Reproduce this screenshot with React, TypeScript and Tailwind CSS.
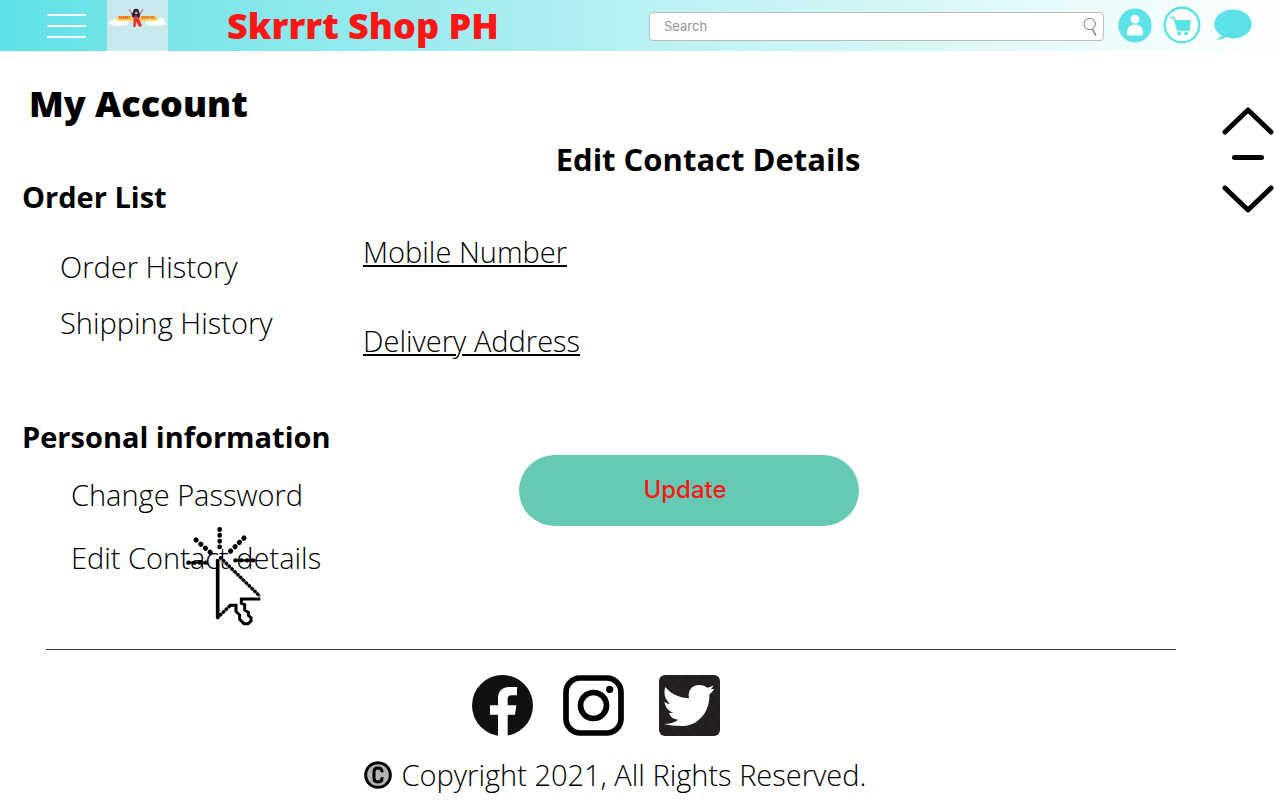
import type { ReactNode } from "react";

function Logo() {
  return (
    <svg viewBox="0 0 183 153" className="h-[51px] w-[61px] shrink-0" role="img" aria-label="Skrrrt Shop PH logo">
      <rect width="183" height="153" fill="#c9e9ee" />
      <g fill="#fff">
        <ellipse cx="36" cy="69" rx="30" ry="8" />
        <circle cx="24" cy="64" r="7" />
        <circle cx="40" cy="62" r="7" />
        <ellipse cx="146" cy="69" rx="31" ry="8" />
        <circle cx="140" cy="62" r="7" />
        <circle cx="162" cy="62" r="8" />
      </g>
      <rect x="29" y="47" width="122" height="15" rx="7" fill="#fcd34f" />
      <text x="35" y="58" fontSize="9" fontWeight="800" fill="#e0502b" fontFamily="Open Sans, sans-serif">SKRRRT</text>
      <text x="103" y="58" fontSize="9" fontWeight="800" fill="#e0502b" fontFamily="Open Sans, sans-serif">SHOP PH</text>
      <path d="M66 29L77 42M108 29L98 42" stroke="#b98ba9" strokeWidth="4" strokeLinecap="round" />
      <path d="M72 38L80 44H95L103 36L96 55H79L72 42Z" fill="#9a3d91" />
      <circle cx="87" cy="35" r="9" fill="#2a2030" />
      <path d="M77 36h20l2 14h-7l-5-5-6 5h-6z" fill="#2a2030" />
      <circle cx="88" cy="39" r="4" fill="#e4a7a0" />
      <path d="M80 55H96L105 78 96 80 88 65 85 81H79Z" fill="#e8301e" />
    </svg>
  );
}

function UserIcon() {
  return (
    <svg viewBox="0 0 102 104" className="h-[35px] w-[34px]" aria-hidden="true">
      <ellipse cx="51" cy="52" rx="50" ry="51" fill="#5ce1e6" />
      <circle cx="51" cy="33" r="13" fill="#fff" />
      <path d="M27 76c0-16 8-27 24-27s24 11 24 27c0 4-2 6-6 6H33c-4 0-6-2-6-6z" fill="#fff" />
    </svg>
  );
}

function CartIcon() {
  return (
    <svg viewBox="0 0 112 112" className="size-[38px]" aria-hidden="true">
      <circle cx="56" cy="56" r="51" fill="#fff" stroke="#5ce1e6" strokeWidth="7" />
      <path d="M23 34h10l10 37h35" fill="none" stroke="#5ce1e6" strokeWidth="4" strokeLinejoin="round" strokeLinecap="round" />
      <path d="M33 41h49l-4 31H42z" fill="#5ce1e6" />
      <circle cx="48" cy="81" r="6" fill="#5ce1e6" />
      <circle cx="68" cy="81" r="6" fill="#5ce1e6" />
    </svg>
  );
}

function ChatIcon() {
  return (
    <svg viewBox="0 0 116 96" className="h-8 w-[38px]" aria-hidden="true">
      <path d="M58 1C27 1 1 20 1 45c0 15 8 27 22 35-4 6-10 10-19 13 14 1 25-3 34-8 6 3 13 4 20 4 32 0 57-19 57-44S89 1 58 1z" fill="#5ce1e6" />
    </svg>
  );
}

function FacebookIcon() {
  return (
    <svg viewBox="0 0 183 183" className="size-[61px]" aria-hidden="true">
      <circle cx="91.5" cy="91.5" r="91.5" fill="#11100e" />
      <path d="M78 184V119H54V91h24V70c0-22 13-34 34-34h23v25h-17c-8 0-11 5-11 11v19h26l-4 28h-22v65z" fill="#fff" />
    </svg>
  );
}

function InstagramIcon() {
  return (
    <svg viewBox="0 0 183 183" className="size-[61px]" aria-hidden="true" fill="none" stroke="#000" strokeWidth="17">
      <rect x="9" y="9" width="165" height="165" rx="43" />
      <circle cx="91.5" cy="91.5" r="39" />
      <circle cx="140" cy="43" r="11" fill="#000" stroke="none" />
    </svg>
  );
}

function TwitterIcon() {
  return (
    <svg viewBox="0 0 183 183" className="size-[61px]" aria-hidden="true">
      <rect width="183" height="183" rx="18" fill="#231f20" />
      <path d="M0 30L153 183M0 75L108 183M0 120L63 183M15 0L183 168M60 0L183 123M105 0L183 78M150 0L183 33M33 0L0 33M78 0L0 78M123 0L0 123M168 0L0 168M183 30L30 183M183 75L75 183M183 120L120 183" stroke="#393536" strokeWidth="1" />
      <path d="M19 36C36 57 59 68 90 70C85 46 100 30 120 30C131 30 139 34 145 38C152 37 157 35 163 31C161 36 159 39 156 43L166 42C162 48 157 53 151 59C153 112 116 153 68 153C47 153 30 151 14 147C33 147 46 143 57 134C43 133 34 126 30 114L43 113C29 108 20 98 16 80C23 85 28 86 33 86C17 73 13 55 19 36Z" fill="#fff" />
    </svg>
  );
}

function CopyrightIcon() {
  return (
    <svg viewBox="0 0 84 84" className="size-7 shrink-0" role="img" aria-label="Copyright">
      <circle cx="42" cy="42" r="37" fill="#b3b3b3" stroke="#000" strokeWidth="9" />
      <path d="M54 34v-2c0-7-5-11-12-11s-12 4-12 11v20c0 7 5 11 12 11s12-4 12-11v-3" fill="none" stroke="#000" strokeWidth="9" />
    </svg>
  );
}

function ClickPointer() {
  return (
    <svg viewBox="0 0 330 360" className="pointer-events-none absolute -top-[23px] left-[99px] h-[120px] w-[110px]" aria-hidden="true" fill="none" stroke="#000">
      <path d="M148 128L271 245M143 308L182 270" stroke="#999" strokeWidth="9" />
      <g strokeWidth="10" strokeLinecap="round">
        <path d="M152 128L271 245M143 308L182 270" strokeDasharray="1 11" />
        <path d="M149 43V96" strokeWidth="14" strokeDasharray="1 16.5" />
        <path d="M78 75L122 113M222 69L181 109" strokeWidth="15" strokeDasharray="1 17.5" />
        <path d="M55 143H108M196 136H252" strokeWidth="13" strokeDasharray="1 16.5" />
        <path d="M55 143H108M196 136H252" strokeWidth="7" />
      </g>
      <path d="M143 132V308" strokeWidth="11" />
      <path d="M271 252H214V265L224 269V285L235 292V301L243 308V318L234 326H222L209 313V300L198 289V271H178" strokeWidth="9" />
    </svg>
  );
}

function SideGroup({ title, children, className }: { title: string; children: ReactNode; className: string }) {
  return (
    <section>
      <h2 className="pl-[22px] text-[29px] leading-10 font-bold">{title}</h2>
      <ul className={className}>{children}</ul>
    </section>
  );
}

export default function App() {
  return (
    <div className="min-h-screen bg-white font-['Open_Sans',sans-serif] text-black">
      <header className="flex h-[51px] items-center bg-linear-to-r from-[#5ce1e6] to-white pr-7">
        <button type="button" aria-label="Menu" className="ml-[47px] flex w-[39px] shrink-0 flex-col gap-[9px]">
          <span className="h-0.5 bg-white" />
          <span className="h-0.5 bg-white" />
          <span className="h-0.5 bg-white" />
        </button>
        <a href="#home" className="ml-[21px] shrink-0"><Logo /></a>
        <p className="ml-[59px] text-4xl font-extrabold whitespace-nowrap text-[#ff1616]">Skrrrt Shop PH</p>
        <form role="search" className="mt-0.5 ml-auto flex h-[29px] w-[455px] items-center rounded-sm border border-[#bdbdbd] bg-white pr-1.5 pl-3.5">
          <input type="search" aria-label="Search" placeholder="Search" className="min-w-0 flex-1 bg-transparent font-['Inter',sans-serif] text-[13px] outline-none placeholder:text-[#949494]" />
          <button type="submit" aria-label="Submit search">
            <svg viewBox="0 0 42 60" className="h-5 w-3.5" aria-hidden="true" fill="none" stroke="#777" strokeWidth="3">
              <circle cx="20" cy="21" r="17" />
              <path d="M28 36L39 56" strokeWidth="4" />
            </svg>
          </button>
        </form>
        <nav aria-label="Shop" className="ml-3.5 flex shrink-0 items-center pb-0.5">
          <a href="#account" aria-label="Account" className="pt-0.5"><UserIcon /></a>
          <a href="#cart" aria-label="Cart" className="ml-[11px]"><CartIcon /></a>
          <a href="#messages" aria-label="Messages" className="ml-[13px]"><ChatIcon /></a>
        </nav>
      </header>

      <main className="flex items-start pt-[33px]">
        <aside className="w-[363px] shrink-0">
          <h1 className="pl-[29px] text-4xl leading-10 font-extrabold">My Account</h1>
          <div className="mt-[53px] flex flex-col gap-[74px]">
            <SideGroup title="Order List" className="mt-[30px] flex flex-col gap-4 pl-[60px] text-[29px] leading-10 font-light">
              <li><a href="#orders">Order History</a></li>
              <li><a href="#shipping">Shipping History</a></li>
            </SideGroup>
            <SideGroup title="Personal information" className="mt-[18px] flex flex-col gap-[23px] pl-[71px] text-[29px] leading-10 font-light">
              <li><a href="#password">Change Password</a></li>
              <li className="relative">
                <a href="#contact" className="whitespace-nowrap">Edit Contact details</a>
                <ClickPointer />
              </li>
            </SideGroup>
          </div>
        </aside>

        <section className="min-w-0 flex-1 pt-[55px]">
          <div className="flex max-w-[690px] flex-col">
            <h2 className="self-center text-[31px] leading-10 font-bold">Edit Contact Details</h2>
            <div className="mt-[53px] flex flex-col items-start gap-[49px] text-[29px] leading-10 font-light">
              <a href="#mobile" className="underline decoration-2 underline-offset-2">Mobile Number</a>
              <a href="#address" className="underline decoration-2 underline-offset-2">Delivery Address</a>
            </div>
            <button type="button" className="mt-[94px] ml-[156px] h-[71px] w-[340px] rounded-full bg-[#66c9b3] pr-2 pb-0.5 font-['Inter',sans-serif] text-2xl font-medium text-[#ff1616]">
              Update
            </button>
          </div>
        </section>

        <div className="mt-[23px] mr-1.5 flex w-[52px] shrink-0 flex-col items-center">
          <button type="button" aria-label="Scroll up">
            <svg viewBox="0 0 52 28" className="h-7 w-[52px]" fill="none" stroke="#000" strokeWidth="5" strokeLinecap="round" strokeLinejoin="round"><path d="M3 25L26 3L49 25" /></svg>
          </button>
          <span className="mt-5 mb-[25px] h-[5px] w-8 rounded-full bg-black" />
          <button type="button" aria-label="Scroll down">
            <svg viewBox="0 0 52 28" className="h-7 w-[52px]" fill="none" stroke="#000" strokeWidth="5" strokeLinecap="round" strokeLinejoin="round"><path d="M3 3L26 25L49 3" /></svg>
          </button>
        </div>
      </main>

      <footer className="mt-[71px]">
        <hr className="mr-[104px] ml-[46px] border-t border-[#333]" />
        <div className="mt-[25px] flex justify-center pr-[89px]">
          <a href="#facebook" aria-label="Facebook"><FacebookIcon /></a>
          <a href="#instagram" aria-label="Instagram" className="ml-[30px]"><InstagramIcon /></a>
          <a href="#twitter" aria-label="Twitter" className="ml-[35px]"><TwitterIcon /></a>
        </div>
        <p className="mt-[19px] flex items-center justify-center gap-2.5 pr-[50px] text-[29px] leading-10 font-light">
          <CopyrightIcon />
          Copyright 2021, All Rights Reserved.
        </p>
      </footer>
    </div>
  );
}
